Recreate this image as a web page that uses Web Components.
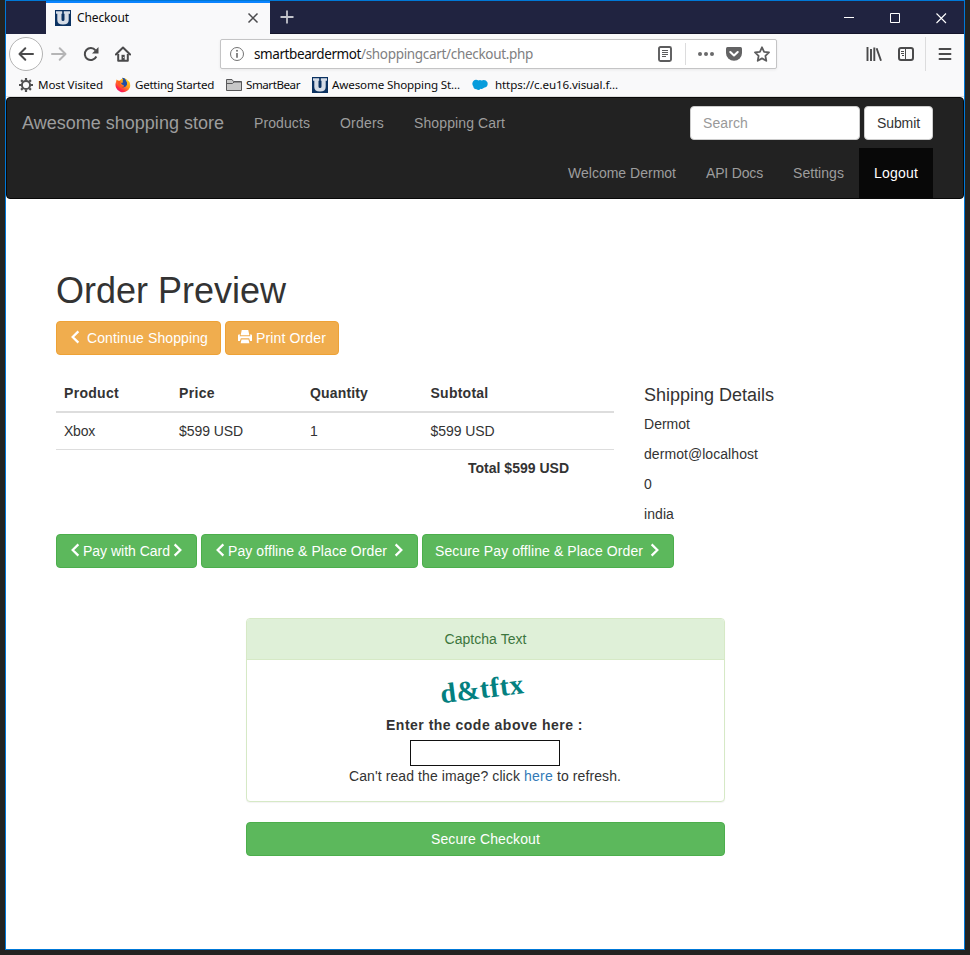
<!DOCTYPE html>
<html lang="en">
<head>
<meta charset="utf-8">
<title>Checkout</title>
<style>
html,body{margin:0;height:100%;overflow:hidden}
body{background:#232321;font:14px/20px "Liberation Sans",Arial,sans-serif;color:#333}
</style>
</head>
<body>
<browser-window>
  <tab-strip slot="tabs"></tab-strip>
  <nav-toolbar slot="toolbar"></nav-toolbar>
  <bookmark-bar slot="bookmarks"></bookmark-bar>
  <store-navbar></store-navbar>
  <order-preview></order-preview>
</browser-window>
<script>
const define = (name, css, html) => customElements.define(name, class extends HTMLElement {
  constructor() {
    super();
    this.attachShadow({mode: 'open'}).innerHTML = `<style>*{box-sizing:border-box}${css}</style>${html}`;
  }
});

/* Single line of text tracked so that it fills the width in its "w" attribute. */
customElements.define('fit-text', class extends HTMLElement {
  constructor() {
    super();
    this.attachShadow({mode: 'open'}).innerHTML =
      '<style>:host{display:inline-block;white-space:pre;flex:none}span{display:inline-block}</style><span><slot></slot></span>';
  }
  connectedCallback() {
    const w = +this.getAttribute('w');
    const span = this.shadowRoot.querySelector('span');
    const n = this.textContent.length;
    const natural = span.getBoundingClientRect().width;
    if (w && n && natural) span.style.letterSpacing = (w - natural) / n + 'px';
    if (w) this.style.width = w + 'px';
  }
});

const U = '<rect width="16" height="16" fill="#0b3262"/><path d="M1 1.200h6.200v2.600H6.500v5.700q0 1.500 1.500 1.500t1.500-1.500V3.800h-.7V1.200H15v2.600h-1.300v6.200q0 4.600-5.700 4.600T2.300 10V3.800H1z" fill="#d5dce6"/>';
const ICONS = {
  favicon: U,
  close: '<path d="M3.500 3.500l9 9m0-9l-9 9" stroke="#4b4b4d" stroke-width="1.500"/>',
  plus: '<path d="M8 1.500v13M1.500 8h13" stroke="#c3c4cc" stroke-width="1.800"/>',
  min: '<path d="M3 8.500h10" stroke="#fff"/>',
  max: '<path d="M3.500 4.500h9v9h-9z" fill="none" stroke="#fff"/>',
  winclose: '<path d="M3.500 4.500l9.500 9.500m0-9.500l-9.500 9.500" stroke="#fff" stroke-width="1.100"/>',
  back: '<path d="M15 8H1.800M7.300 2.200L1.500 8l5.800 5.800" fill="none" stroke="#4a4a4b" stroke-width="2" stroke-linecap="round" stroke-linejoin="round"/>',
  fwd: '<path d="M1 8h13.200M8.700 2.200L14.500 8l-5.800 5.800" fill="none" stroke="#b5b5b6" stroke-width="2" stroke-linecap="round" stroke-linejoin="round"/>',
  reload: '<path d="M13.300 10.500a6 6 0 1 1-.8-6.200" fill="none" stroke="#4a4a4b" stroke-width="2"/><path d="M15.500 1v6.500H9z" fill="#4a4a4b"/>',
  home: '<path d="M.9 8.500L8 1.500l7.100 7" fill="none" stroke="#4a4a4b" stroke-width="2" stroke-linecap="round" stroke-linejoin="round"/><path d="M3.200 8v6.700h9.600V8" fill="none" stroke="#4a4a4b" stroke-width="2" stroke-linejoin="round"/><path d="M6.500 8.800h3.200v6H6.500z" fill="#4a4a4b"/><path d="M8.300 11h.8v1h-.8z" fill="#fff"/>',
  info: '<circle cx="8" cy="8" r="6.500" fill="none" stroke="#737373"/><path d="M8 7v4.800" stroke="#737373" stroke-width="1.700"/><circle cx="8" cy="4.800" r="1" fill="#737373"/>',
  reader: '<rect x="2" y="1" width="12" height="14" rx="1.500" fill="none" stroke="#5c5c5d" stroke-width="1.900"/><path d="M5 4.500h6M5 6.500h6M5 8.500h6M5 10.500h4" stroke="#5c5c5d"/>',
  dots: '<g fill="#6a6a6b"><circle cx="2" cy="8" r="2"/><circle cx="8" cy="8" r="2"/><circle cx="14" cy="8" r="2"/></g>',
  pocket: '<path d="M1.500 1h13Q16 1 16 2.500V7a8 7.700 0 0 1-16 0V2.500Q0 1 1.500 1z" fill="#636364"/><path d="M4.300 6L8 9.400 11.700 6" fill="none" stroke="#fff" stroke-width="2.100" stroke-linecap="round" stroke-linejoin="round"/>',
  star: '<path d="M8 1.300l2.100 4.500 4.900.600-3.600 3.400.900 5L8 12.400l-4.300 2.400.900-5L1 6.400l4.900-.600z" fill="none" stroke="#5c5c5d" stroke-width="1.800" stroke-linejoin="round"/>',
  library: '<path d="M1.500 1v14M5 3v12M8.300 1.500v13.500" stroke="#4a4a4b" stroke-width="1.900"/><path d="M10.600 2.200L15 14.800" stroke="#4a4a4b" stroke-width="1.900"/>',
  sidebar: '<rect x="1" y="2" width="14" height="12" rx="2" fill="none" stroke="#4a4a4b" stroke-width="2"/><path d="M7.500 2v12" stroke="#4a4a4b"/><path d="M3 5.500h3M3 7.500h3M4 9.500h2" stroke="#4a4a4b"/>',
  menu: '<path d="M2.500 3h11M2.500 8h11M2.500 13h11" stroke="#4a4a4b" stroke-width="1.900" stroke-linecap="round"/>',
  gear: '<g stroke="#4f4f50" stroke-width="2.200"><path d="M8 1v2.500M8 12.500V15M1 8h2.500M12.500 8H15M3.100 3.100l1.600 1.600M11.300 11.300l1.600 1.600M3.100 12.900l1.600-1.600M11.300 4.700l1.600-1.600"/><circle cx="8" cy="8" r="4.100" fill="none" stroke-width="2"/></g>',
  firefox: '<defs><linearGradient id="f" x1=".9" y1="0" x2=".2" y2="1"><stop stop-color="#ffe52b"/><stop offset=".45" stop-color="#ff9a1c"/><stop offset=".8" stop-color="#ff2744"/><stop offset="1" stop-color="#e31587"/></linearGradient></defs><path d="M1.500 2.500L4 4 8 1l3 .8L14.500 5q1.200 3 .4 5.500A7.400 7.400 0 1 1 1 5z" fill="url(#f)"/><path d="M7 .8q3.500 0 4 3 1.500 1.500 1 4A4.200 4.200 0 0 1 5 9q2.800 1.200 4-.8-2.700-.300-3-2.200.8-.500 2-.500-.800-2 .200-3z" fill="#204ea5"/><path d="M1.800 4q3-1 4 1Q5 6 5.500 7.800 7 9.500 9.300 9q-2 2.500-4.800 1Z" fill="#ff5a20"/>',
  folder: '<path d="M.5 2.500H6l1.500 2h8v9H.5z" fill="#c8c8c8" stroke="#58585a"/><path d="M1 6.500h5.500L8 5h7.500" fill="none" stroke="#58585a"/>',
  cloud: '<path d="M1 4.500Q2 2.600 4 2.700q1.500 0 2.500.800Q8 2.400 9.500 3.500q4-1.500 5.900 1.700 1.300 4.600-3.400 5.600-1.500 1.600-3.500.9-1.500 2-4 .600Q1.500 12 1.300 9.500-.5 7 1 4.500z" fill="#079cdc"/>',
  left: '<path d="M10.700 1.600L4.200 8l6.500 6.400" fill="none" stroke="#fff" stroke-width="2.600"/>',
  right: '<path d="M5.300 1.600L11.800 8l-6.500 6.400" fill="none" stroke="#fff" stroke-width="2.600"/>',
  print: '<path d="M4.300 0h7.400l1.300 6H3zM1 5.200h1.400l-.5 2h12.200l-.5-2H15q1 0 1 1V12.700h-2.200l-1-3.200H3.200l-1 3.200H0V6.200q0-1 1-1zM4 10.800h8l1 4.200H3z" fill="#fff"/>'
};
customElements.define('ui-icon', class extends HTMLElement {
  constructor() {
    super();
    this.attachShadow({mode: 'open'}).innerHTML =
      `<style>:host{display:block;flex:none;width:16px;height:16px}svg{display:block;width:100%;height:100%}</style><svg viewBox="0 0 16 16">${ICONS[this.getAttribute('name')]}</svg>`;
  }
});

define('browser-window', `
  :host{display:grid;grid-template-rows:33px 41px 22px 1fr;width:960px;height:950px;margin-left:5px;box-sizing:border-box;border:1px solid #0078d7;background:#fff}
  .books{border-bottom:1px solid #dedede;background:#f9f9fa}
  main{min-height:0}`,
  `<slot name="tabs"></slot><slot name="toolbar"></slot><div class="books"><slot name="bookmarks"></slot></div><main><slot></slot></main>`);

define('tab-strip', `
  :host{display:flex;background:#202340;font:12px/16px "Noto Sans","Open Sans",sans-serif;color:#0c0c0d;border-bottom:0}
  .tab{margin-left:40px;width:224px;background:#f9f9fa;border-top:2px solid #0a84ff;display:flex;align-items:center;padding:0 9px 2px 9px}
  .tab fit-text{margin:0 auto 0 6px}
  .strip{flex:1;display:flex;align-items:center;padding:0 15px 0 9px;border-bottom:1px solid #14152b}
  .gap{flex:1}.ctl{display:flex;gap:30px}`,
  `<div class="tab"><ui-icon name="favicon"></ui-icon><fit-text w="52">Checkout</fit-text><ui-icon name="close"></ui-icon></div>
   <div class="strip"><ui-icon name="plus"></ui-icon><span class="gap"></span><div class="ctl"><ui-icon name="min"></ui-icon><ui-icon name="max"></ui-icon><ui-icon name="winclose"></ui-icon></div></div>`);

define('nav-toolbar', `
  :host{display:flex;align-items:center;background:#f9f9fa;font:13.5px/20px "Noto Sans","Open Sans",sans-serif;padding:0 0 1px 3px}
  .back{width:34px;height:34px;border:1px solid #b3b3b3;border-radius:50%;background:#fff;display:grid;place-items:center;flex:none}
  .btns{display:flex;gap:16px;margin-left:8px}
  .url{margin-left:89px;width:557px;height:30px;border:1px solid #c4c4c5;border-radius:2px;background:#fff;box-shadow:0 1px 3px #0001;display:flex;align-items:center;padding:0 6px 0 8px;color:#0c0c0d}
  .url .path{color:#808081;margin-right:auto}
  .url fit-text:first-of-type{margin-left:9px}
  .sep{width:1px;height:22px;background:#dcdcdd;margin:0 12px}
  .acts{display:flex;gap:12px}
  .right{display:flex;gap:16px;margin-left:89px}
  .vline{width:1px;height:34px;background:#dcdcdd;margin:0 11px}`,
  `<div class="back"><ui-icon name="back"></ui-icon></div>
   <div class="btns"><ui-icon name="fwd"></ui-icon><ui-icon name="reload"></ui-icon><ui-icon name="home"></ui-icon></div>
   <div class="url"><ui-icon name="info"></ui-icon><fit-text w="107">smartbeardermot</fit-text><fit-text class="path" w="172">/shoppingcart/checkout.php</fit-text>
     <ui-icon name="reader"></ui-icon><span class="sep"></span><div class="acts"><ui-icon name="dots"></ui-icon><ui-icon name="pocket"></ui-icon><ui-icon name="star"></ui-icon></div></div>
   <div class="right"><ui-icon name="library"></ui-icon><ui-icon name="sidebar"></ui-icon></div><span class="vline"></span><ui-icon name="menu"></ui-icon>`);

define('bookmark-bar', `
  :host{display:flex;align-items:center;height:19px;padding-left:12px;gap:12px;font:11.6px/16px "Noto Sans","Open Sans",sans-serif;color:#0c0c0d}
  div{display:flex;align-items:center;gap:4px}
  .wide{gap:7px}`,
  `<div><ui-icon name="gear"></ui-icon><fit-text w="65">Most Visited</fit-text></div>
   <div><ui-icon name="firefox"></ui-icon><fit-text w="79">Getting Started</fit-text></div>
   <div><ui-icon name="folder"></ui-icon><fit-text w="54">SmartBear</fit-text></div>
   <div><ui-icon name="favicon"></ui-icon><fit-text w="128">Awesome Shopping St...</fit-text></div>
   <div class="wide"><ui-icon name="cloud"></ui-icon><fit-text w="123">https://c.eu16.visual.f...</fit-text></div>`);

define('store-navbar', `
  :host{display:block;box-sizing:border-box;height:102px;background:#222;border:1px solid #080808;border-radius:4px;color:#9d9d9d;padding-left:15px;padding-right:30px}
  .row{display:flex;align-items:center;height:50px}
  .brand{font-size:18px;margin-right:30px}
  .links{display:flex;gap:30px;flex:1}
  .search{width:170px;height:34px;border:1px solid #ccc;border-radius:4px;background:#fff;color:#999;padding:6px 12px;margin-right:4px}
  .submit{width:69px;height:34px;border:1px solid #ccc;border-radius:4px;background:#fff;color:#333;padding:6px 12px}
  .second{justify-content:flex-end}
  .item{padding:15px}
  .active{background:#080808;color:#fff}`,
  `<div class="row"><fit-text class="brand" w="202">Awesome shopping store</fit-text>
     <div class="links"><fit-text w="56">Products</fit-text><fit-text w="44">Orders</fit-text><fit-text w="91">Shopping Cart</fit-text></div>
     <div class="search"><fit-text w="45">Search</fit-text></div><div class="submit"><fit-text w="43">Submit</fit-text></div></div>
   <div class="row second"><div class="item"><fit-text w="108">Welcome Dermot</fit-text></div><div class="item"><fit-text w="57">API Docs</fit-text></div><div class="item"><fit-text w="51">Settings</fit-text></div><div class="item active"><fit-text w="44">Logout</fit-text></div></div>`);

define('bs-button', `
  :host{display:flex;align-items:center;justify-content:center;box-sizing:border-box;height:34px;border:1px solid #4cae4c;background:#5cb85c;border-radius:4px;color:#fff;padding:0 12px;flex:none}
  :host([kind=warning]){background:#f0ad4e;border-color:#eea236}
  ::slotted(ui-icon){width:14px;height:14px;margin-top:-2px}`, `<slot></slot>`);

define('order-table', `
  :host{display:block;width:558px;flex:none}
  .r{display:grid;grid-template-columns:115px 131px 120.5px 1fr;padding:8px 0 8px 8px}
  .h{font-weight:bold;border-bottom:2px solid #ddd}
  .t{font-weight:bold;border-top:1px solid #ddd;display:flex;padding-left:412px}`,
  `<div class="r h"><fit-text w="55">Product</fit-text><fit-text w="36">Price</fit-text><fit-text w="58">Quantity</fit-text><fit-text w="58">Subtotal</fit-text></div>
   <div class="r"><fit-text w="31">Xbox</fit-text><fit-text w="64">$599 USD</fit-text><fit-text w="8">1</fit-text><fit-text w="64">$599 USD</fit-text></div>
   <div class="r t"><fit-text w="101">Total $599 USD</fit-text></div>`);

define('shipping-details', `
  :host{display:flex;flex-direction:column;gap:10px}
  .h{font-size:18px;line-height:20px;margin-bottom:-1px}`,
  `<fit-text class="h" w="130">Shipping Details</fit-text><fit-text w="46">Dermot</fit-text><fit-text w="114">dermot@localhost</fit-text><fit-text w="8">0</fit-text><fit-text w="30">india</fit-text>`);

define('captcha-panel', `
  :host{display:block;box-sizing:border-box;width:479px;height:184px;border:1px solid #d6e9c6;border-radius:4px;box-shadow:0 1px 1px #0000000d;overflow:hidden;background:#fff}
  .head{height:41px;padding-top:10px;text-align:center;background:#dff0d8;color:#3c763d;border-bottom:1px solid #d6e9c6}
  .body{display:flex;flex-direction:column;align-items:center}
  .code{height:55px;padding-top:15px;margin-right:4px}
  .code fit-text{font:bold 28px/28px "Liberation Serif",serif;color:#048080;transform:rotate(-7deg)}
  .label{font-weight:bold;margin-right:2px}
  input{width:150px;height:26px;border:1px solid #111;padding:0;margin:5px 1px 0 0;background:#fff}
  p{margin:0 1px 0 0}a{color:#337ab7}`,
  `<div class="head"><fit-text w="82">Captcha Text</fit-text></div>
   <div class="body"><div class="code"><fit-text w="87">d&amp;tftx</fit-text></div><fit-text class="label" w="197">Enter the code above here :</fit-text><input aria-label="Captcha code">
   <p><fit-text w="175">Can't read the image? click </fit-text><a><fit-text w="29">here</fit-text></a><fit-text w="68"> to refresh.</fit-text></p></div>`);

define('order-preview', `
  :host{display:block;padding:72px 50px 0}
  h1{font-size:36px;line-height:40px;margin:0 0 10px;height:40px;font-weight:normal}
  .bar{display:flex;gap:4px}
  .cols{display:flex;gap:30px;margin-top:20px}
  shipping-details{padding-top:10px}
  .pay{margin-top:10px}
  .check{width:479px;margin:50px 0 0 190px;display:grid;gap:20px}`,
  `<h1><fit-text w="230">Order Preview</fit-text></h1>
   <div class="bar"><bs-button kind="warning"><ui-icon name="left"></ui-icon><fit-text w="125"> Continue Shopping</fit-text></bs-button>
     <bs-button kind="warning"><ui-icon name="print"></ui-icon><fit-text w="74"> Print Order</fit-text></bs-button></div>
   <div class="cols"><order-table></order-table><shipping-details></shipping-details></div>
   <div class="bar pay"><bs-button><ui-icon name="left"></ui-icon><fit-text w="87">Pay with Card</fit-text><ui-icon name="right"></ui-icon></bs-button>
     <bs-button><ui-icon name="left"></ui-icon><fit-text w="163">Pay offline &amp; Place Order </fit-text><ui-icon name="right"></ui-icon></bs-button>
     <bs-button><fit-text w="212">Secure Pay offline &amp; Place Order </fit-text><ui-icon name="right"></ui-icon></bs-button></div>
   <div class="check"><captcha-panel></captcha-panel><bs-button><fit-text w="109">Secure Checkout</fit-text></bs-button></div>`);
</script>
</body>
</html>
